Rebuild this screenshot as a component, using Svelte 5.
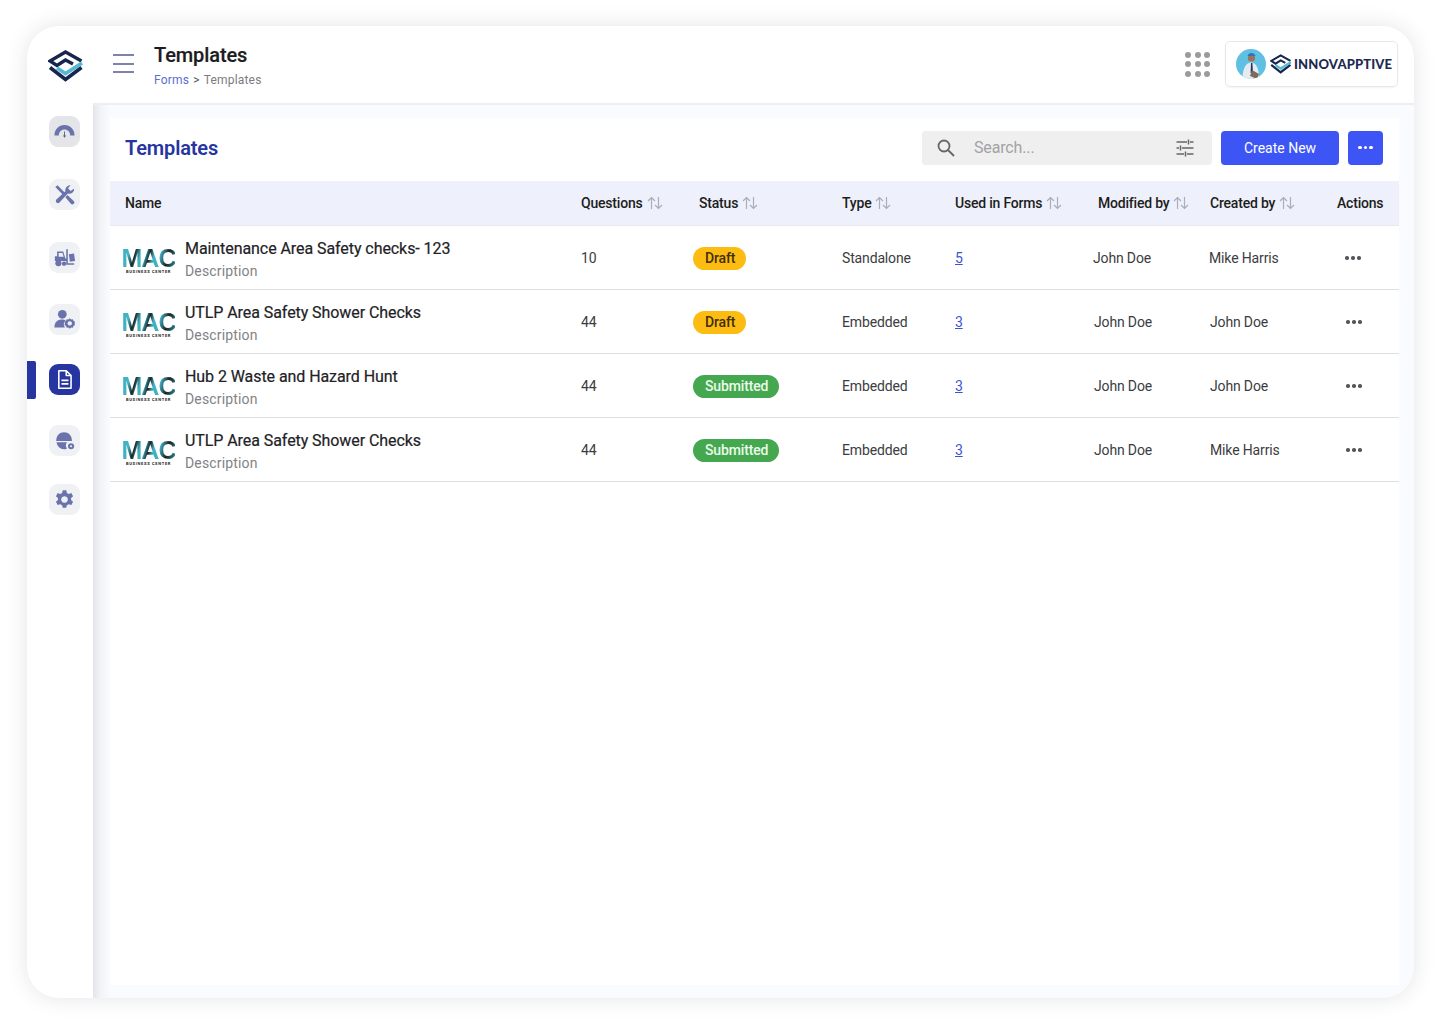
<script>
  const navItems = ['gauge', 'tools', 'forklift', 'usergear', 'doc', 'helmet', 'gear'];
  const columns = [
    { label: 'Name', sort: false },
    { label: 'Questions', sort: true },
    { label: 'Status', sort: true },
    { label: 'Type', sort: true },
    { label: 'Used in Forms', sort: true },
    { label: 'Modified by', sort: true },
    { label: 'Created by', sort: true },
    { label: 'Actions', sort: false }
  ];
  const rows = [
    { name: 'Maintenance Area Safety checks- 123', q: 10, status: 'Draft', type: 'Standalone', used: 5, mod: 'John Doe', by: 'Mike Harris' },
    { name: 'UTLP Area Safety Shower Checks', q: 44, status: 'Draft', type: 'Embedded', used: 3, mod: 'John Doe', by: 'John Doe' },
    { name: 'Hub 2 Waste and Hazard Hunt', q: 44, status: 'Submitted', type: 'Embedded', used: 3, mod: 'John Doe', by: 'John Doe' },
    { name: 'UTLP Area Safety Shower Checks', q: 44, status: 'Submitted', type: 'Embedded', used: 3, mod: 'John Doe', by: 'Mike Harris' }
  ];
</script>

{#snippet mark(w, h)}
  <svg class="mark" viewBox="0 0 36 32" width={w} height={h} fill="none" stroke-linejoin="miter">
    <path d="M33.500 11 L17.500 2 L2 11 L9 15.500 L17.500 10 L25 14" stroke="#16264f" stroke-width="3.300" />
    <path d="M2 17.500 L17.500 29.500 L33.500 17.500" stroke="#16264f" stroke-width="3.600" />
    <path d="M9 18 L17.500 23.500 L34 13" stroke="#55b9d6" stroke-width="3.800" />
  </svg>
{/snippet}

<div class="page">
  <div class="frame">
    <aside class="side">
      <div class="logo">{@render mark(36, 32)}</div>
      <nav class="nav">
        {#each navItems as item}
          <div class="slot">
            {#if item === 'doc'}<span class="marker"></span>{/if}
            <div class="tile" class:active={item === 'doc'} class:grey={item === 'gauge'}>
              <svg viewBox="0 0 24 24" fill="#6a73ab">
                {#if item === 'gauge'}
                  <path d="M0.500 16.500 C0.500 9.500 5.500 4.500 12 4.500 C18.500 4.500 23.500 9.500 23.500 16.500 L18.500 16.500 C18.500 12.500 15.500 9.800 12 9.800 C8.500 9.800 5.500 12.500 5.500 16.500 Z" />
                  <path d="M11.500 12 h1 v4.500 h1.300 L12 19 L10.200 16.500 h1.300 Z" fill="#555a80" />
                {:else if item === 'tools'}
                  <path d="M1.500 3.500 L4 1.500 L13 10.500 L10.700 12.800 Z" />
                  <path d="M13 15 L15.300 12.700 L22.500 19.500 A2.200 2.200 0 0 1 19.300 22.700 Z" />
                  <path d="M23 5 A5.500 5.500 0 0 1 15.800 10.800 L6 21.500 A2.600 2.600 0 0 1 2.400 18 L13 8.200 A5.500 5.500 0 0 1 19 1.500 L16 4.800 L19 8 Z" />
                {:else if item === 'forklift'}
                  <path fill-rule="evenodd" d="M3.500 5 h7 l2.500 8 h1 V2.500 h1.800 V18.500 H23 v1.800 H14 V16 H1 V10.500 h2.500 Z M5.300 6.800 V11 h5.700 l-1.300 -4.200 Z" />
                  <circle cx="5" cy="18.500" r="3.500" /><circle cx="11.500" cy="19" r="2.500" />
                  <rect x="17.500" y="8" width="6" height="8.500" transform="rotate(-8 20 12)" />
                {:else if item === 'usergear'}
                  <circle cx="9.500" cy="6" r="5" />
                  <path d="M0.500 21 C0.500 15 4 12 9.500 12 C11 12 12.200 12.300 13.300 12.800 A6.500 6.500 0 0 0 12.500 21 Z" />
                  <path fill-rule="evenodd" d="M18 10.500 l1.500 1.400 2 -.3 .7 1.900 1.800 1.100 -.5 1.900 .5 1.900 -1.800 1.100 -.7 1.900 -2 -.3 L18 22.500 l-1.500 -1.400 -2 .3 -.7 -1.900 -1.800 -1.100 .5 -1.900 -.5 -1.900 1.800 -1.100 .7 -1.900 2 .3 Z M18 14 a2.500 2.500 0 1 0 .01 0 Z" />
                {:else if item === 'doc'}
                  <path fill="none" stroke="#fff" stroke-width="1.800" stroke-linejoin="round" d="M5.500 2 H14 L19.500 7.500 V22 H5.500 Z M14 2 V7.500 H19.500" />
                  <path fill="none" stroke="#fff" stroke-width="1.800" d="M8.500 13 H16.500 M8.500 17 H16.500" />
                {:else if item === 'helmet'}
                  <path d="M2.500 12.500 C2.500 6 6.500 2.500 11.500 2.500 C16.500 2.500 20.500 6 20.500 12.500 Z" />
                  <path d="M2.800 14 H15 A5.500 5.500 0 0 0 14.800 21 C13.800 21.600 12.800 22 11.500 22 C7 22 3.800 18.500 2.800 14 Z" />
                  <circle cx="19.500" cy="18.500" r="3.500" />
                  <circle cx="19.500" cy="18.500" r="1.200" fill="#f0f1f4" />
                {:else}
                  <path fill-rule="evenodd" d="M10 1.500 h4 l.7 3 2.200 1.200 2.900 -1 2 3.600 -2.300 2 v2.400 l2.300 2 -2 3.600 -2.900 -1 -2.200 1.200 -.7 3 h-4 l-.7 -3 -2.200 -1.200 -2.900 1 -2 -3.600 2.300 -2 v-2.400 l-2.300 -2 2 -3.600 2.900 1 2.200 -1.200 Z M12 8.200 a3.800 3.800 0 1 0 .01 0 Z" />
                {/if}
              </svg>
            </div>
          </div>
        {/each}
      </nav>
    </aside>

    <div class="main">
      <header class="top">
        <div class="burger"><i></i><i></i><i></i></div>
        <div class="heading">
          <h1>Templates</h1>
          <div class="crumbs"><span class="crumb-link">Forms</span><span class="sep">&gt;</span><span>Templates</span></div>
        </div>
        <div class="apps">
          {#each Array(9) as _}<i></i>{/each}
        </div>
        <div class="profile">
          <svg class="avatar" viewBox="0 0 30 30" width="30" height="30">
            <circle cx="15" cy="15" r="15" fill="#5fc0e4" />
            <clipPath id="av"><circle cx="15" cy="15" r="15" /></clipPath>
            <g clip-path="url(#av)">
              <path d="M6 31 C7 20 9 14 15 13.500 C21 14 23 20 23 31 Z" fill="#e6ebf2" />
              <circle cx="15.500" cy="9" r="3.600" fill="#9a7359" />
              <path d="M11.500 7 C12.500 3 18.500 3 19.500 7 Z" fill="#2f73b8" />
              <path d="M15 14 h1.400 l.6 10 h-2.400 Z" fill="#24345f" />
              <path d="M16 21 L23 25 L21 30 L14 27 Z" fill="#7d6a5d" />
            </g>
          </svg>
          {@render mark(22, 20)}
          <span class="brand">INNOVAPPTIVE</span>
        </div>
      </header>

      <section class="content">
        <div class="card">
          <div class="toolbar">
            <h2>Templates</h2>
            <div class="search">
              <svg viewBox="0 0 20 20" width="20" height="20" fill="none" stroke="#666" stroke-width="1.800"><circle cx="8" cy="8" r="5.500" /><path d="M12 12 L18 18" /></svg>
              <span class="placeholder">Search...</span>
              <svg viewBox="0 0 20 20" width="20" height="20" fill="none" stroke="#666" stroke-width="1.500"><path d="M1.500 4 H12 M15 4 H18.500 M13.500 1.500 V6.500 M1.500 10 H4 M7 10 H18.500 M5.500 7.500 V12.500 M1.500 16 H9 M12 16 H18.500 M10.500 13.500 V18.500" /></svg>
            </div>
            <button class="create">Create New</button>
            <button class="more"><i></i><i></i><i></i></button>
          </div>

          <div class="table">
            <div class="grid head">
              {#each columns as col}
                <div class="th">
                  {col.label}
                  {#if col.sort}
                    <svg viewBox="0 0 16 14" width="16" height="14" fill="none" stroke-width="1.200"><path stroke="#a9aebc" d="M4.500 13 V1.500 M1 5 L4.500 1.500 L8 5" /><path stroke="#a9aebc" d="M11.500 1 V12.500 M8 9 L11.500 12.500 L15 9" /></svg>
                  {/if}
                </div>
              {/each}
            </div>
            {#each rows as r}
              <div class="grid row">
                <div class="namecell">
                  <div class="mac">
                    <span class="mac-word">MAC</span>
                    <span class="mac-sub">BUSINESS CENTER</span>
                  </div>
                  <div class="names">
                    <div class="title">{r.name}</div>
                    <div class="desc">Description</div>
                  </div>
                </div>
                <div class="td">{r.q}</div>
                <div class="td"><span class="pill" class:draft={r.status === 'Draft'}>{r.status}</span></div>
                <div class="td">{r.type}</div>
                <div class="td"><span class="link">{r.used}</span></div>
                <div class="td shift">{r.mod}</div>
                <div class="td">{r.by}</div>
                <div class="td dots"><i></i><i></i><i></i></div>
              </div>
            {/each}
          </div>
        </div>
      </section>
    </div>
  </div>
</div>

<style>
  :global(body) {
    margin: 0;
    background: #fff;
    font-family: Roboto, "Liberation Sans", sans-serif;
  }
  .page {
    height: 1024px;
    box-sizing: border-box;
    padding: 26px 26px 26px 27px;
    overflow: hidden;
  }
  .frame {
    height: 972px;
    display: flex;
    background: #fff;
    border-radius: 32px;
    overflow: clip;
    box-shadow: 0 0 22px rgba(40, 44, 70, 0.13);
  }
  .side {
    width: 66px;
    flex: none;
    display: flex;
    flex-direction: column;
    align-items: center;
    padding-top: 24px;
    box-sizing: border-box;
  }
  .logo { margin-left: 11px; flex: none; height: 32px; }
  .mark { display: block; flex: none; }
  .nav {
    width: 100%;
    margin-top: 20px;
    display: flex;
    flex-direction: column;
  }
  .slot {
    height: 59px;
    position: relative;
    display: flex;
    align-items: center;
    justify-content: center;
    padding-left: 9px;
  }
  .slot:nth-child(2), .slot:nth-child(3) { margin-top: 4px; }
  .slot:nth-child(4) { margin-top: 3px; }
  .slot:nth-child(5) { margin-top: 1px; }
  .slot:nth-child(6) { margin-top: 2px; }
  .marker {
    position: absolute;
    left: 0;
    top: 10.500px;
    width: 9px;
    height: 38px;
    background: #26359f;
    border-radius: 0 2px 2px 0;
  }
  .tile {
    width: 31px;
    height: 31px;
    border-radius: 9px;
    background: #f0f1f4;
    display: flex;
    align-items: center;
    justify-content: center;
  }
  .tile svg { width: 21px; height: 21px; }
  .tile.grey { background: #e4e5e8; }
  .tile.active { background: #26359f; }
  .main {
    flex: 1;
    min-width: 0;
    display: flex;
    flex-direction: column;
  }
  .top {
    height: 79px;
    flex: none;
    box-sizing: border-box;
    display: flex;
    align-items: center;
    padding: 0 16px 0 20px;
    border-bottom: 2px solid #eceef2;
  }
  .burger {
    width: 21px;
    display: flex;
    flex-direction: column;
    gap: 6.500px;
    margin-right: 20px;
    margin-top: -2px;
  }
  .burger i { height: 2px; background: #7d83a9; display: block; }
  .heading { flex: 1; }
  h1 {
    margin: 0;
    font-size: 20px;
    line-height: 24px;
    font-weight: 500;
    letter-spacing: -0.1px;
    color: #1c1c1e;
    -webkit-text-stroke: 0.2px #1c1c1e;
  }
  .crumbs {
    margin-top: 6px;
    font-size: 12px;
    line-height: 14px;
    letter-spacing: 0.2px;
    color: #7b7b80;
    display: flex;
    gap: 4px;
  }
  .crumb-link { color: #5a6fd0; }
  .sep { color: #555; }
  .apps {
    display: grid;
    grid-template-columns: repeat(3, 6px);
    gap: 3.500px;
    margin-right: 15px;
    margin-top: -1px;
  }
  .apps i {
    width: 6px;
    height: 6px;
    border-radius: 50%;
    background: #9b9b9b;
  }
  .profile {
    width: 173px;
    height: 46px;
    box-sizing: border-box;
    border: 1px solid #e7e8ec;
    border-radius: 5px;
    display: flex;
    align-items: center;
    padding-left: 10px;
    gap: 4px;
    margin-top: -1px;
    box-shadow: 0 1px 2px rgba(0, 0, 0, 0.05);
  }
  .avatar { flex: none; }
  .brand {
    font-family: Lato, Inter, sans-serif;
    font-weight: 900;
    font-size: 13px;
    letter-spacing: 0.15px;
    margin-left: -2px;
    color: #1c2a52;
  }
  .content {
    flex: 1;
    min-height: 0;
    display: flex;
    padding: 13px 15px 13px 17px;
    background: linear-gradient(to right, #e3e5ea 0, #f3f4f8 8px, #fafbfe 17px);
  }
  .card {
    flex: 1;
    min-width: 0;
    background: #fff;
  }
  .toolbar {
    height: 63px;
    box-sizing: border-box;
    padding: 0 16px 4px 15px;
    display: flex;
    align-items: center;
  }
  h2 {
    margin: 0;
    flex: 1;
    font-size: 20px;
    font-weight: 600;
    letter-spacing: -0.15px;
    color: #26359f;
  }
  .search {
    width: 290px;
    height: 34px;
    box-sizing: border-box;
    background: #efefef;
    border-radius: 4px;
    display: flex;
    align-items: center;
    padding: 0 17px 0 14px;
    margin-right: 9px;
  }
  .placeholder {
    flex: 1;
    margin-left: 18px;
    font-size: 16px;
    letter-spacing: -0.15px;
    color: #a2a2a6;
  }
  button {
    border: 0;
    height: 34px;
    border-radius: 4px;
    background: #3d55f5;
    color: #fff;
    font-family: inherit;
    padding: 0;
  }
  .create {
    width: 118px;
    font-size: 14px;
    margin-right: 9px;
  }
  .more {
    width: 35px;
    display: flex;
    align-items: center;
    justify-content: center;
    gap: 2px;
  }
  .more i {
    width: 3.500px;
    height: 3.500px;
    border-radius: 50%;
    background: #fff;
  }
  .grid {
    display: grid;
    grid-template-columns: 471px 118px 143px 113px 143px 112px 127px 62px;
    align-items: center;
  }
  .head {
    height: 45px;
    background: #eef1fb;
    border-bottom: 1px solid #e8e9ee;
    box-sizing: border-box;
  }
  .th {
    font-size: 14px;
    font-weight: 500;
    letter-spacing: -0.2px;
    color: #1d1d20;
    display: flex;
    align-items: center;
    gap: 4px;
  }
  .th:first-child { padding-left: 15px; }
  .row {
    height: 64px;
    box-sizing: border-box;
    border-bottom: 1px solid #dedfe2;
  }
  .namecell {
    display: flex;
    align-items: center;
    padding-left: 11px;
  }
  .mac {
    width: 55px;
    flex: none;
    margin-right: 9px;
    padding-top: 6px;
    display: flex;
    flex-direction: column;
    align-items: center;
  }
  .mac-word {
    font-family: "Liberation Sans", sans-serif;
    font-weight: 700;
    font-size: 25px;
    line-height: 21px;
    letter-spacing: -1px;
    background: linear-gradient(105deg, #3fb3c2 0 14%, #1a2327 24%, #3fb3c2 34%, #3fb3c2 42%, #1a2327 50%, #3fb3c2 58%, #3fb3c2 68%, #1a2327 82%, #2f8f9c 100%);
    -webkit-background-clip: text;
    background-clip: text;
    color: transparent;
  }
  .mac-sub {
    font-size: 4px;
    line-height: 5px;
    font-weight: 700;
    letter-spacing: 0.7px;
    white-space: nowrap;
    color: #222;
  }
  .names { padding-top: 4px; }
  .title {
    font-size: 16px;
    line-height: 22px;
    font-weight: 400;
    letter-spacing: -0.07px;
    color: #222226;
    -webkit-text-stroke: 0.2px #222226;
  }
  .desc {
    font-size: 14px;
    line-height: 20px;
    margin-top: 1px;
    color: #828286;
    letter-spacing: 0.15px;
  }
  .td {
    font-size: 14px;
    letter-spacing: -0.15px;
    color: #3c3c40;
    padding-top: 1px;
  }
  .shift { margin-left: -4px; }
  .row:nth-child(2) .td:nth-child(n+6) { transform: translateX(-1px); }
  .pill {
    display: inline-block;
    margin-left: -6px;
    height: 23px;
    line-height: 23px;
    padding: 0 11px 0 12px;
    border-radius: 12px;
    background: #45a851;
    color: #eafbe9;
    font-weight: 500;
  }
  .pill.draft {
    background: #fdbc11;
    color: #41300a;
  }
  .link {
    color: #3d55d5;
    text-decoration: underline;
  }
  .dots {
    display: flex;
    gap: 2.500px;
    padding-left: 9px;
  }
  .dots i {
    width: 3.500px;
    height: 3.500px;
    border-radius: 50%;
    background: #55555a;
  }
</style>
